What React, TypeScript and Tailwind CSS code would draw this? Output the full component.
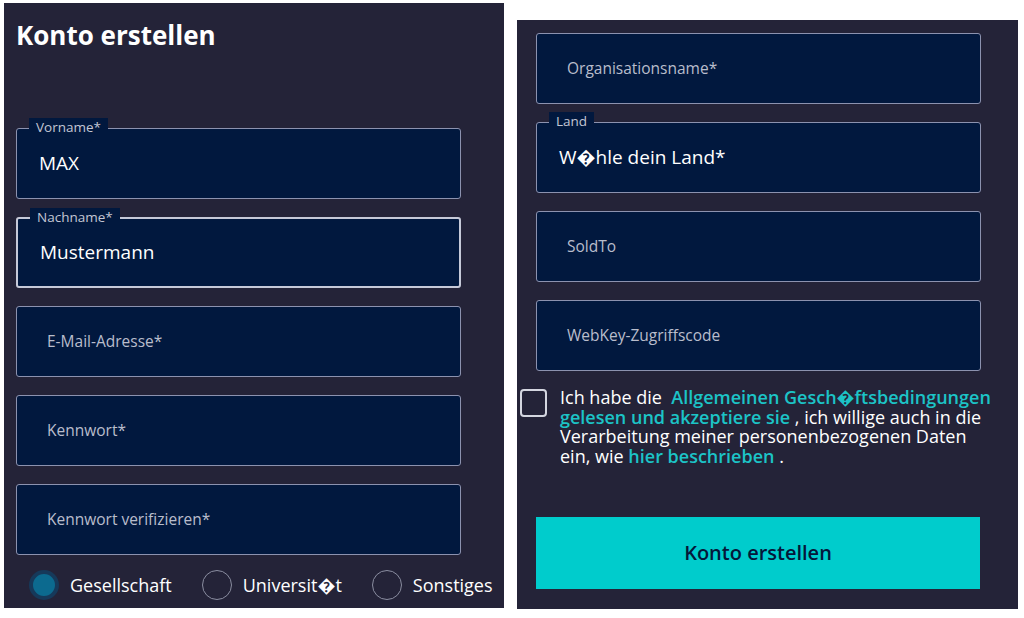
import React from "react";

const font = { fontFamily: '"Open Sans", "DejaVu Sans", sans-serif' };

function Field({ label, value, placeholder, focused }: { label?: string; value?: string; placeholder?: string; focused?: boolean }) {
  return (
    <div
      className={
        "relative h-[71px] w-[445px] rounded-[3px] bg-[#01183e] flex items-center " +
        (focused ? "border-2 border-[#c6c9d8]" : "border border-[#8c92af]")
      }
    >
      {label && (
        <span className="absolute -top-[11px] left-[12px] bg-[#01183e] px-[7px] text-[13.5px] leading-[18px] text-[#c3c6d4]">
          {label}
        </span>
      )}
      {value && <span className="pl-[22px] text-[19px] text-white">{value}</span>}
      {placeholder && <span className="pl-[30px] text-[15.5px] text-[#b9bdcc]">{placeholder}</span>}
    </div>
  );
}

function Radio({ label, checked }: { label: string; checked?: boolean }) {
  return (
    <div className="flex items-center gap-[11px]">
      {checked ? (
        <div className="h-[30px] w-[30px] rounded-full border-[4px] border-[#16395a] bg-[#0c6a8f]" />
      ) : (
        <div className="h-[30px] w-[30px] rounded-full border border-[#8a8da0]" />
      )}
      <span className="text-[18px] text-white">{label}</span>
    </div>
  );
}

export default function App() {
  return (
    <div className="flex h-[618px] w-[1024px] bg-white" style={font}>
      {/* left card */}
      <div className="ml-[4px] mt-[3px] flex h-[605px] w-[500px] flex-col bg-[#242338] pl-[12px]">
        <h1 className="mt-[14px] text-[26px] font-bold leading-[36px] text-white">Konto erstellen</h1>
        <div className="mt-[75px] flex flex-col gap-[18px]">
          <Field label="Vorname*" value="MAX" />
          <Field label="Nachname*" value="Mustermann" focused />
          <Field placeholder="E-Mail-Adresse*" />
          <Field placeholder="Kennwort*" />
          <Field placeholder="Kennwort verifizieren*" />
        </div>
        <div className="mt-[15px] flex items-center gap-[30px] pl-[13px]">
          <Radio label="Gesellschaft" checked />
          <Radio label={"Universit\uFFFDt"} />
          <Radio label="Sonstiges" />
        </div>
      </div>

      {/* right card */}
      <div className="ml-[13px] mt-[20px] flex h-[589px] w-[501px] flex-col bg-[#242338] pl-[19px]">
        <div className="mt-[13px] flex flex-col gap-[18px]">
          <Field placeholder="Organisationsname*" />
          <Field label="Land" value={"W\uFFFDhle dein Land*"} />
          <Field placeholder="SoldTo" />
          <Field placeholder="WebKey-Zugriffscode" />
        </div>
        <div className="-ml-[16px] mt-[17px] flex gap-[13px]">
          <div className="mt-[1px] h-[28px] w-[27px] shrink-0 rounded-[4px] border-2 border-[#d4d6e0]" />
          <p className="w-[436px] text-[18px] leading-[19.5px] text-white">
            Ich habe die&nbsp;{" "}
            <span className="font-semibold text-[#1cc4c7]">Allgemeinen Gesch{"\uFFFD"}ftsbedingungen gelesen und akzeptiere sie</span>{" "}
            , ich willige auch in die Verarbeitung meiner personenbezogenen Daten ein, wie{" "}
            <span className="font-semibold text-[#1cc4c7]">hier beschrieben</span> .
          </p>
        </div>
        <button className="mt-[51px] flex h-[72px] w-[444px] items-center justify-center bg-[#00cccc] text-[20px] font-semibold text-[#05173a]">
          Konto erstellen
        </button>
      </div>
    </div>
  );
}
